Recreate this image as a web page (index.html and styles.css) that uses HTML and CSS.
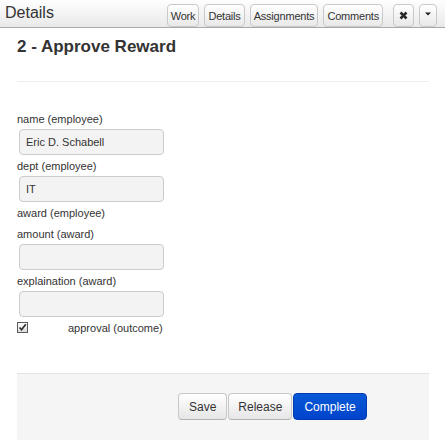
FILE: index.html
```html
<!DOCTYPE html>
<html>
<head>
<meta charset="utf-8">
<link rel="stylesheet" href="styles.css">
</head>
<body>
<div class="topbar">
  <div class="title">Details</div>
  <div class="tools">
    <span class="tbtn">Work</span>
    <span class="tbtn">Details</span>
    <span class="tbtn">Assignments</span>
    <span class="tbtn">Comments</span>
    <span class="tbtn icon close"><svg width="9" height="9" viewBox="0 0 9 9"><path d="M1.5 1.5L7.5 7.5M7.5 1.5L1.5 7.5" stroke="#2a2a2a" stroke-width="2.6" stroke-linecap="butt"/></svg></span>
    <span class="tbtn icon caret"><svg width="6" height="4" viewBox="0 0 6 4"><path d="M0 0.5H6L3 3.5Z" fill="#222"/></svg></span>
  </div>
</div>
<div class="content">
  <h2 class="task">2 - Approve Reward</h2>
  <hr class="rule">
  <div class="form">
    <div class="field">
      <div class="lbl">name (employee)</div>
      <div class="inp">Eric D. Schabell</div>
    </div>
    <div class="field">
      <div class="lbl">dept (employee)</div>
      <div class="inp">IT</div>
    </div>
    <div class="field">
      <div class="lbl">award (employee)</div>
    </div>
    <div class="field">
      <div class="lbl">amount (award)</div>
      <div class="inp"></div>
    </div>
    <div class="field">
      <div class="lbl">explaination (award)</div>
      <div class="inp"></div>
    </div>
    <div class="check-row">
      <span class="cbox"><svg width="11" height="11" viewBox="0 0 11 11"><defs><linearGradient id="g" x1="0" y1="0" x2="0" y2="1"><stop offset="0" stop-color="#ffffff"/><stop offset="1" stop-color="#d8d8d8"/></linearGradient></defs><rect x="0.5" y="0.5" width="10" height="10" fill="url(#g)" stroke="#5a5a5a"/><path d="M2.6 5.4L4.6 7.8L8.8 2.2" fill="none" stroke="#2b2b2b" stroke-width="1.6"/></svg></span>
      <span class="clabel">approval (outcome)</span>
    </div>
  </div>
  <div class="actions">
    <span class="btn">Save</span>
    <span class="btn release">Release</span>
    <span class="btn primary">Complete</span>
  </div>
</div>
</body>
</html>
```
FILE: styles.css
```css
html, body {
  margin: 0;
  padding: 0;
  background: #ffffff;
  font-family: "Liberation Sans", Arial, sans-serif;
  color: #333333;
}

.topbar {
  display: flex;
  align-items: flex-start;
  height: 27px;
  border-bottom: 1px solid #a9a9a9;
  background: linear-gradient(#fefefe, #e9e9e9);
  padding: 0 8px 0 5px;
}

.title {
  flex: 1;
  font-size: 16px;
  line-height: 18px;
  padding-top: 4px;
  color: #333333;
}

.tools {
  display: flex;
  padding-top: 4px;
}

.tbtn {
  display: flex;
  align-items: center;
  justify-content: center;
  height: 21px;
  padding: 0 3px;
  margin-left: 5px;
  border: 1px solid #c9c9c9;
  border-radius: 4px;
  background: linear-gradient(#ffffff, #e8e8e8);
  font-size: 11px;
  letter-spacing: -0.2px;
  color: #333333;
}

.tbtn.close {
  width: 19px;
  padding: 0;
  margin-left: 10px;
}

.tbtn.caret {
  width: 16px;
  padding: 0;
  align-items: flex-start;
}

.tbtn.caret svg {
  margin-top: 7px;
}

.content {
  padding: 0 16px 0 17px;
}

.task {
  margin: 9px 0 0 0;
  font-size: 17px;
  line-height: 20px;
  font-weight: bold;
  color: #333333;
}

.rule {
  margin: 24px 0 0 0;
  border: 0;
  border-top: 1px solid #eeeeee;
  height: 0;
}

.form {
  padding-top: 28px;
}

.field {
  margin-bottom: 2px;
}

.lbl {
  font-size: 11px;
  line-height: 19px;
  color: #333333;
}

.inp {
  width: 131px;
  height: 24px;
  margin-left: 2px;
  padding: 0 6px;
  border: 1px solid #cccccc;
  border-radius: 4px;
  background: #f3f3f3;
  font-size: 11px;
  line-height: 24px;
  color: #333333;
}

.check-row {
  display: flex;
  align-items: center;
  height: 18px;
}

.cbox {
  display: flex;
  width: 11px;
  height: 11px;
  margin-top: -1px;
}

.clabel {
  margin-left: 40px;
  font-size: 11px;
  color: #333333;
}

.actions {
  display: flex;
  gap: 1px;
  margin-top: 36px;
  padding: 19px 20px 20px 161px;
  background: #f5f5f5;
  border-top: 1px solid #e3e3e3;
}

.btn {
  display: flex;
  align-items: center;
  height: 25px;
  padding: 0 10px;
  border: 1px solid #c8c8c8;
  border-bottom-color: #b3b3b3;
  border-radius: 4px;
  background: linear-gradient(#ffffff, #e6e6e6);
  font-size: 12px;
  color: #333333;
}

.btn.release {
  padding: 0 9px;
}

.btn.primary {
  background: linear-gradient(#0758d6, #0044cc);
  border-color: #003bb0;
  color: #ffffff;
  padding: 0 10px;
}
```
